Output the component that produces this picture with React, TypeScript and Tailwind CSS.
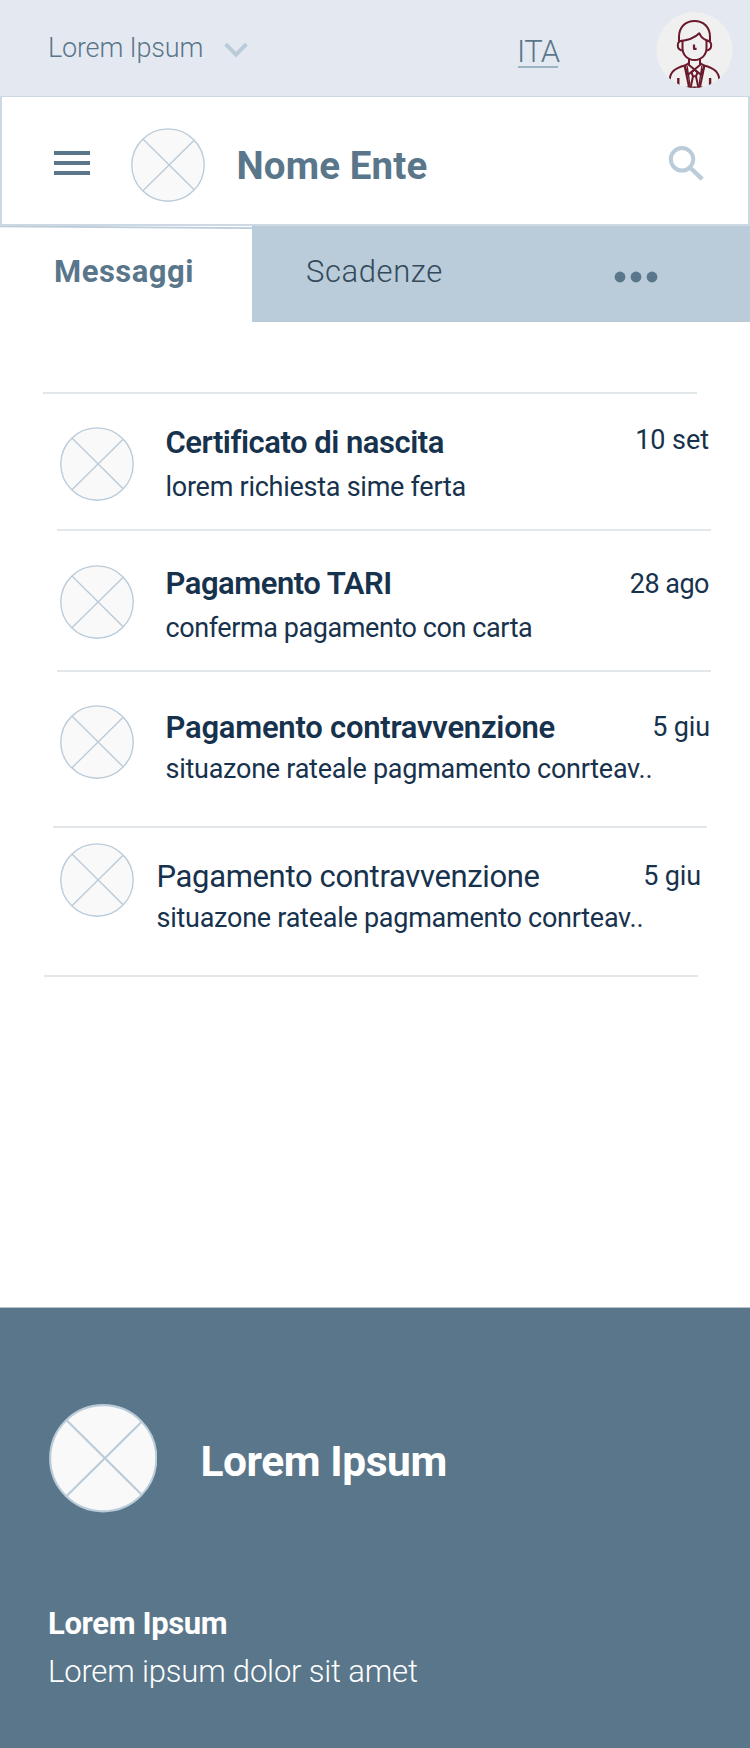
type PlaceholderProps = { className: string; strokeWidth?: number };

function Placeholder({ className, strokeWidth = 1.35 }: PlaceholderProps) {
  return (
    <svg viewBox="0 0 74 74" className={className} fill="none" stroke="#bacbd9" strokeWidth={strokeWidth} aria-hidden="true">
      <circle cx="37" cy="37" r="36.2" fill="#f9f9f9" />
      <path d="M12.2 11.2 62.9 61.6M62.9 12.4 12 62.8" />
    </svg>
  );
}

function Avatar() {
  return (
    <svg viewBox="0 0 77 77" className="h-[77px] w-[77px] shrink-0" aria-label="Profilo">
      <defs>
        <clipPath id="avatar-clip">
          <circle cx="38.5" cy="38" r="38" />
        </clipPath>
      </defs>
      <circle cx="38.5" cy="38" r="38" fill="#f0f0f0" />
      <g clipPath="url(#avatar-clip)" fill="none" stroke="#6b1a2b" strokeWidth="2" strokeLinejoin="round">
        <path d="M23 29V25C23 15 29.5 9 38.5 9S54 15 54 25v4" />
        <path d="M23 29.2C32 28.5 38 26.5 43.3 21.2 45 25.5 48.5 28.5 54 29.2" />
        <path d="M26.5 28.8v7.2C26.5 43 31.5 48 38.5 48S50.5 43 50.5 36v-7.2" />
        <path d="M26 28.8c-3 .2-4.2 2.2-4.2 4.6 0 2.8 2 4.8 5.2 5M51 28.8c3 .2 4.2 2.2 4.2 4.6 0 2.8-2 4.8-5.2 5" />
        <path d="M38 32.5v4.3h2.6" strokeWidth="2.2" />
        <path d="M33 47v6l5.5 4.5L44 53v-6" />
        <path d="M33 51l-4.5 2.8 3.6 9 6.4-5.3 6.4 5.3 3.6-9L44 51" />
        <path d="M28.5 53.3l4.8 23.2M48.5 53.3l-4.8 23.2" />
        <path d="M31 53.5l3.3 22M46 53.5l-3.3 22" strokeWidth="1.4" />
        <path d="M38.5 57.5l-3 2.8 1.5 4h3l1.5-4zM37 64.3l-2.5 12M40 64.3l2.5 12" />
        <path d="M29 53.5C19 56 13.7 60 13.7 69v4M48 53.5C58 56 63.3 60 63.3 69v4" />
        <path d="M22.3 66v10M54.1 66v10" strokeWidth="2.4" />
        <path d="M30.5 75.6h16" />
      </g>
    </svg>
  );
}

type Message = {
  title: string;
  detail: string;
  date: string;
  row: string;
  icon: string;
  text: string;
  titleStyle: string;
  detailStyle: string;
  dateStyle: string;
  line: string;
};

const messages: Message[] = [
  {
    title: "Certificato di nascita",
    detail: "lorem richiesta sime ferta",
    date: "10 set",
    row: "h-[135px]",
    icon: "mt-[33px]",
    text: "ml-[32px] mt-[29px]",
    titleStyle: "font-semibold tracking-[-0.48px]",
    detailStyle: "mt-[4px] tracking-[-0.26px]",
    dateStyle: "mt-[26px] mr-[41px] tracking-[-0.06px]",
    line: "ml-[57px]",
  },
  {
    title: "Pagamento TARI",
    detail: "conferma pagamento con carta",
    date: "28 ago",
    row: "h-[139px]",
    icon: "mt-[33.5px]",
    text: "ml-[32px] mt-[33px]",
    titleStyle: "font-semibold tracking-[-0.48px]",
    detailStyle: "mt-[4px] tracking-[-0.42px]",
    dateStyle: "mt-[33px] mr-[41px] tracking-[-0.5px]",
    line: "ml-[57px]",
  },
  {
    title: "Pagamento contravvenzione",
    detail: "situazone rateale pagmamento conrteav..",
    date: "5 giu",
    row: "h-[154px]",
    icon: "mt-[33px]",
    text: "ml-[32px] mt-[36px]",
    titleStyle: "font-semibold tracking-[-0.24px]",
    detailStyle: "mt-[1px] tracking-[-0.26px]",
    dateStyle: "mt-[35px] mr-[41px] tracking-[-0.15px]",
    line: "ml-[53px]",
  },
  {
    title: "Pagamento contravvenzione",
    detail: "situazone rateale pagmamento conrteav..",
    date: "5 giu",
    row: "h-[147px]",
    icon: "mt-[15px]",
    text: "ml-[23px] mt-[29px]",
    titleStyle: "font-normal tracking-[-0.34px]",
    detailStyle: "mt-[1px] tracking-[-0.26px]",
    dateStyle: "mt-[28px] mr-[50px] tracking-[-0.15px]",
    line: "ml-[43.5px]",
  },
];

function MessageRow({ message }: { message: Message }) {
  return (
    <li>
      <div className={`flex items-start pl-[59.5px] ${message.row}`}>
        <Placeholder className={`h-[74px] w-[74px] shrink-0 ${message.icon}`} />
        <div className={`flex-1 whitespace-nowrap leading-[40px] ${message.text}`}>
          <h2 className={`text-[31px] ${message.titleStyle}`}>{message.title}</h2>
          <p className={`text-[27px] ${message.detailStyle}`}>{message.detail}</p>
        </div>
        <time className={`shrink-0 text-[27px] leading-[40px] ${message.dateStyle}`}>{message.date}</time>
      </div>
      <div className={`h-[2px] w-[654px] bg-[#e2e7ec] ${message.line}`} />
    </li>
  );
}

export default function App() {
  return (
    <div className="flex h-[1748px] w-[750px] flex-col overflow-hidden bg-white font-['Roboto','Liberation_Sans',sans-serif] text-[#17324d]">
      <div className="flex h-[96px] shrink-0 items-start bg-[#e4e9f1] text-[#5a768a]">
        <span className="ml-[48px] mt-[28px] w-[156px] whitespace-nowrap text-[27px] font-light leading-[40px] tracking-[-0.2px]">Lorem Ipsum</span>
        <svg viewBox="0 0 24 16" className="ml-[20px] mt-[42px] h-4 w-6" fill="none" stroke="#bacbd9" strokeWidth="4" aria-hidden="true">
          <path d="M1.6 2.2 12 12.6 22.4 2.2" />
        </svg>
        <a className="ml-[270px] mt-[31px] flex w-[40px] flex-col">
          <span className="-ml-[1px] h-[35px] whitespace-nowrap text-[31px] font-light leading-[41px] tracking-[-0.7px]">ITA</span>
          <span className="h-[2px] bg-[#9cb4c1]" />
        </a>
        <div className="ml-[98px] mt-[12px]">
          <Avatar />
        </div>
      </div>

      <header className="flex h-[130px] shrink-0 items-start border-x-2 border-b-2 border-t border-[#ccd9e4] text-[#5a768a]">
        <svg viewBox="0 0 36 24" className="ml-[52px] mt-[54px] h-6 w-9" fill="currentColor" aria-label="Menu">
          <path d="M0 0h36v4H0zM0 10h36v4H0zM0 20h36v4H0z" />
        </svg>
        <Placeholder className="ml-[41px] mt-[31px] h-[74px] w-[74px]" />
        <h1 className="ml-[31.5px] mt-[49px] w-[420px] whitespace-nowrap text-[38.5px] font-bold leading-[40px] tracking-[0.14px]">Nome Ente</h1>
        <svg viewBox="0 0 36 36" className="ml-[11px] mt-[47.5px] h-9 w-9 shrink-0" fill="none" stroke="#bacbd9" strokeWidth="4" aria-label="Cerca">
          <circle cx="14" cy="14.3" r="11.2" />
          <path d="M23 23.5 34.2 34.2" strokeWidth="4.4" />
        </svg>
      </header>

      <nav className="flex h-[96px] shrink-0 bg-[#bacbd9]">
        <div className="w-[252px] bg-white text-[#5a768a]">
          <svg viewBox="0 0 252 4" className="h-1 w-[252px]" stroke="#bacbd9" strokeWidth="1.7" aria-hidden="true">
            <path d="M0 0.3 252 2.2" />
          </svg>
          <span className="ml-[54px] mt-[22px] block text-[31px] font-bold leading-[40px] tracking-[0.5px]">Messaggi</span>
        </div>
        <span className="ml-[54px] mt-[26px] w-[308px] text-[31px] font-light leading-[40px] tracking-[0.58px] text-[#334a5c]">Scadenze</span>
        <svg viewBox="0 0 44 12" className="mt-[45px] h-3 w-11" fill="#5a768a" aria-label="Altro">
          <circle cx="6" cy="6" r="5.4" />
          <circle cx="22" cy="6" r="5.4" />
          <circle cx="38" cy="6" r="5.4" />
        </svg>
      </nav>

      <main className="h-[985px] shrink-0 pt-[70px]">
        <div className="ml-[43px] h-[2px] w-[654px] bg-[#e2e7ec]" />
        <ul>
          {messages.map((message, index) => (
            <MessageRow key={index} message={message} />
          ))}
        </ul>
      </main>

      <footer className="flex-1 border-t border-[#b7c4ce] bg-[#5a768a] text-white">
        <div className="flex items-start">
          <Placeholder className="ml-[48.5px] mt-[96px] h-[108.5px] w-[108.5px]" strokeWidth={1.45} />
          <p className="ml-[43.5px] mt-[133.5px] whitespace-nowrap text-[42.5px] font-bold leading-[40px] tracking-[-0.45px]">Lorem Ipsum</p>
        </div>
        <div className="ml-[48px] mt-[91px] whitespace-nowrap text-[31px] leading-[40px]">
          <p className="font-bold tracking-[-0.36px]">Lorem Ipsum</p>
          <p className="mt-[8px] font-light tracking-[-0.17px]">Lorem ipsum dolor sit amet</p>
        </div>
      </footer>
    </div>
  );
}
